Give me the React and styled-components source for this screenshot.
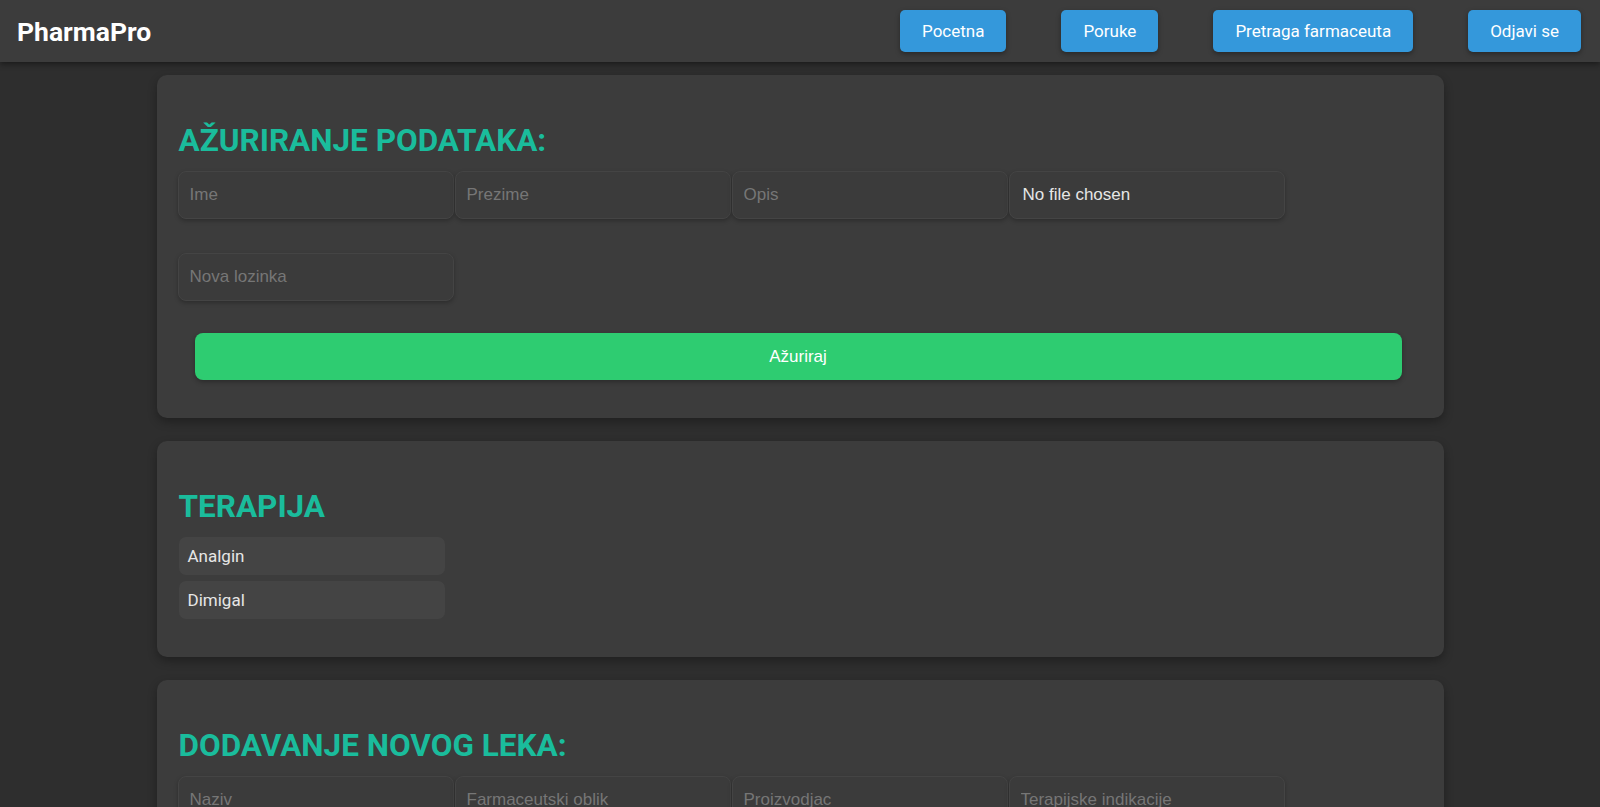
import React from 'react';
import styled, { createGlobalStyle } from 'styled-components';

const GlobalStyle = createGlobalStyle`
  html, body {
    margin: 0;
    padding: 0;
    background: #2e2e2e;
    overflow: hidden;
  }
  body {
    font-family: 'Liberation Sans', Arial, sans-serif;
    font-size: 17px;
    color: #e0e0e0;
  }
  * {
    box-sizing: border-box;
  }
`;

const Navbar = styled.nav`
  height: 62px;
  display: flex;
  align-items: center;
  justify-content: space-between;
  padding: 0 19px 0 17px;
  background: #3c3c3c;
  box-shadow: 0 2px 6px rgba(0, 0, 0, 0.45);
  position: relative;
  z-index: 2;
`;

const Logo = styled.div`
  font-family: Roboto, sans-serif;
  font-weight: 700;
  font-size: 26.5px;
  color: #ffffff;
`;

const NavLinks = styled.div`
  display: flex;
  align-items: center;
  gap: 55px;
`;

const NavButton = styled.button`
  height: 42px;
  padding: 0 22px;
  border: none;
  border-radius: 5px;
  background: #3498db;
  color: #ffffff;
  font-family: Roboto, sans-serif;
  font-size: 17px;
  box-shadow: 0 2px 5px rgba(0, 0, 0, 0.35);
  cursor: pointer;
`;

const Main = styled.main`
  display: flex;
  flex-direction: column;
  align-items: center;
  gap: 23px;
  padding-top: 13px;
`;

const Card = styled.section`
  width: 1287px;
  background: #3c3c3c;
  border-radius: 10px;
  padding: 47px 22px 38px 21px;
  box-shadow: 0 4px 10px rgba(0, 0, 0, 0.3);
`;

const Title = styled.h2`
  margin: 0 0 12px 1px;
  font-family: Roboto, sans-serif;
  font-weight: 700;
  font-size: 31.5px;
  color: #1abc9c;
`;

const Fields = styled.div`
  display: flex;
  flex-wrap: wrap;
  column-gap: 1px;
  row-gap: 34px;
  width: 1108px;
`;

const Field = styled.input`
  width: 276px;
  height: 48px;
  padding: 0 11px;
  background: #3b3b3b;
  border: 1px solid #444444;
  border-radius: 8px;
  box-shadow: 0 2px 4px rgba(0, 0, 0, 0.25);
  color: #e6e6e6;
  font-family: 'Liberation Sans', Arial, sans-serif;
  font-size: 17px;
  outline: none;

  &::placeholder {
    color: #767676;
  }

  &[type='file'] {
    padding: 0 13px;
    line-height: 46px;
  }
  &::file-selector-button {
    display: none;
  }
`;

const SubmitButton = styled.button`
  display: block;
  width: calc(100% - 37px);
  height: 47px;
  margin: 32px 20px 0 17px;
  border: none;
  border-radius: 8px;
  background: #2ecc71;
  color: #ffffff;
  font-family: 'Liberation Sans', Arial, sans-serif;
  font-size: 17px;
  box-shadow: 0 2px 5px rgba(0, 0, 0, 0.3);
  cursor: pointer;
`;

const TherapyList = styled.ul`
  list-style: none;
  margin: 0 0 0 1px;
  padding: 0;
  display: flex;
  flex-direction: column;
  gap: 6px;
`;

const TherapyItem = styled.li`
  width: 266px;
  height: 38px;
  display: flex;
  align-items: center;
  padding: 0 9px;
  background: #444444;
  border-radius: 7px;
  font-family: Roboto, sans-serif;
  font-size: 17px;
  color: #e6e6e6;
`;

const navItems = ['Pocetna', 'Poruke', 'Pretraga farmaceuta', 'Odjavi se'];
const therapy = ['Analgin', 'Dimigal'];
const drugFields = ['Naziv', 'Farmaceutski oblik', 'Proizvodjac', 'Terapijske indikacije'];

export default function App() {
  return (
    <>
      <GlobalStyle />
      <Navbar>
        <Logo>PharmaPro</Logo>
        <NavLinks>
          {navItems.map((n) => (
            <NavButton key={n}>{n}</NavButton>
          ))}
        </NavLinks>
      </Navbar>
      <Main>
        <Card>
          <Title>AŽURIRANJE PODATAKA:</Title>
          <Fields>
            <Field placeholder='Ime' />
            <Field placeholder='Prezime' />
            <Field placeholder='Opis' />
            <Field type='file' />
            <Field type='password' placeholder='Nova lozinka' />
          </Fields>
          <SubmitButton>Ažuriraj</SubmitButton>
        </Card>
        <Card>
          <Title>TERAPIJA</Title>
          <TherapyList>
            {therapy.map((t) => (
              <TherapyItem key={t}>{t}</TherapyItem>
            ))}
          </TherapyList>
        </Card>
        <Card>
          <Title>DODAVANJE NOVOG LEKA:</Title>
          <Fields>
            {drugFields.map((f) => (
              <Field key={f} placeholder={f} />
            ))}
          </Fields>
        </Card>
      </Main>
    </>
  );
}
